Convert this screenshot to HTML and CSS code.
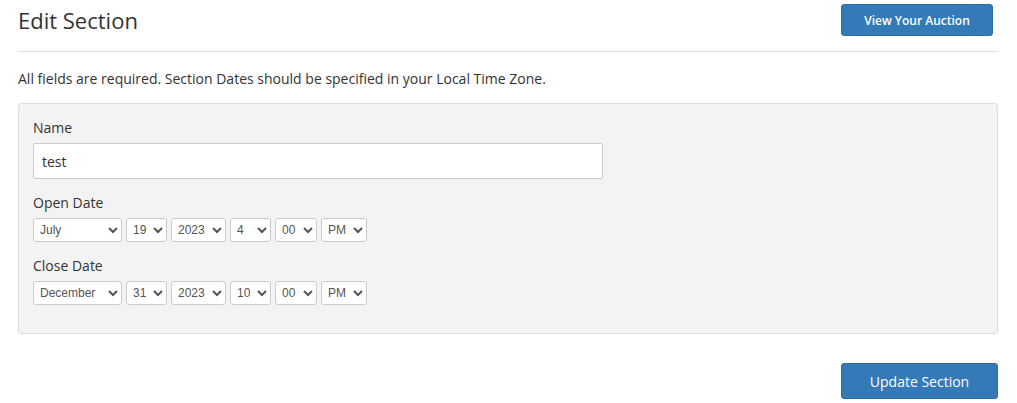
FILE: index.html
```html
<!DOCTYPE html>
<html>
<head>
<meta charset="utf-8">
<link rel="stylesheet" href="styles.css">
</head>
<body>
<div class="page">
  <div class="header">
    <h1 class="title">Edit Section</h1>
    <button class="btn btn-small">View Your Auction</button>
  </div>
  <p class="intro">All fields are required. Section Dates should be specified in your Local Time Zone.</p>
  <div class="panel">
    <div class="field">
      <label class="label">Name</label>
      <input class="text-input" type="text" value="test">
    </div>
    <div class="field">
      <label class="label">Open Date</label>
      <div class="selects">
        <select class="sel w-month"><option>July</option></select>
        <select class="sel w-day"><option>19</option></select>
        <select class="sel w-year"><option>2023</option></select>
        <select class="sel w-hour"><option>4</option></select>
        <select class="sel w-min"><option>00</option></select>
        <select class="sel w-ampm"><option>PM</option></select>
      </div>
    </div>
    <div class="field">
      <label class="label">Close Date</label>
      <div class="selects">
        <select class="sel w-month"><option>December</option></select>
        <select class="sel w-day"><option>31</option></select>
        <select class="sel w-year"><option>2023</option></select>
        <select class="sel w-hour"><option>10</option></select>
        <select class="sel w-min"><option>00</option></select>
        <select class="sel w-ampm"><option>PM</option></select>
      </div>
    </div>
  </div>
  <div class="actions">
    <button class="btn btn-large">Update Section</button>
  </div>
</div>
</body>
</html>
```
FILE: styles.css
```css
html, body {
  margin: 0;
  padding: 0;
  background: #fff;
}
body {
  font-family: "Open Sans", "Liberation Sans", sans-serif;
  color: #333;
  font-size: 14px;
}
.page {
  width: 980px;
  padding: 0 18px;
}
.header {
  display: flex;
  justify-content: space-between;
  align-items: flex-start;
  border-bottom: 1px solid #ddd;
  height: 51px;
}
.title {
  margin: 0;
  padding-top: 4px;
  font-size: 22px;
  font-weight: 400;
  line-height: 32px;
  color: #333;
}
.btn {
  font-family: "Open Sans", "Liberation Sans", sans-serif;
  background: #337ab7;
  color: #fff;
  border: 1px solid #2e6da4;
  border-radius: 3px;
  cursor: pointer;
}
.btn-small {
  margin-top: 4px;
  margin-right: 5px;
  width: 152px;
  height: 32px;
  font-size: 12px;
  font-weight: 600;
  padding: 0;
}
.intro {
  margin: 17px 0 14px;
  line-height: 20px;
}
.panel {
  background: #f3f3f3;
  border: 1px solid #ddd;
  border-radius: 3px;
  padding: 14px 14px 28px;
}
.field {
  margin-bottom: 14px;
}
.field:last-child {
  margin-bottom: 0;
}
.label {
  display: block;
  line-height: 20px;
  margin-bottom: 5px;
}
.text-input {
  display: block;
  box-sizing: border-box;
  width: 570px;
  height: 36px;
  border: 1px solid #ccc;
  border-radius: 2px;
  padding: 0 8px;
  font-family: "Open Sans", sans-serif;
  font-size: 14px;
  color: #333;
  background: #fff;
}
.selects {
  display: flex;
  gap: 4px;
}
.sel {
  box-sizing: border-box;
  height: 24px;
  border: 1px solid #ccc;
  border-radius: 3px;
  background: #fff;
  font-family: "Liberation Sans", Arial, sans-serif;
  font-size: 12px;
  color: #555;
  padding: 0 2px;
}
.w-month { width: 89px; }
.w-day { width: 41px; }
.w-year { width: 55px; }
.w-hour { width: 41px; }
.w-min { width: 42px; }
.w-ampm { width: 46px; }
.actions {
  display: flex;
  justify-content: flex-end;
  margin-top: 29px;
}
.btn-large {
  width: 157px;
  height: 36px;
  font-size: 14px;
  padding: 0;
}
```
